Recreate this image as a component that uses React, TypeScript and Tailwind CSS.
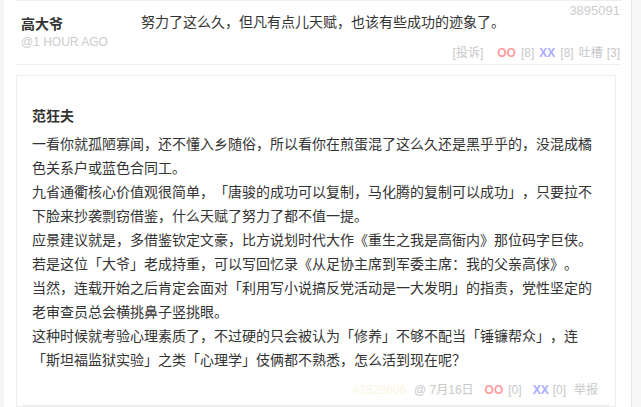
import React from "react";

const FONT = {
  fontFamily: '"Liberation Sans", "Noto Sans CJK SC", sans-serif',
};

const paragraphs = [
  "一看你就孤陋寡闻，还不懂入乡随俗，所以看你在煎蛋混了这么久还是黑乎乎的，没混成橘色关系户或蓝色合同工。",
  "九省通衢核心价值观很简单，「唐骏的成功可以复制，马化腾的复制可以成功」，只要拉不下脸来抄袭剽窃借鉴，什么天赋了努力了都不值一提。",
  "应景建议就是，多借鉴钦定文豪，比方说划时代大作《重生之我是高衙内》那位码字巨侠。",
  "若是这位「大爷」老成持重，可以写回忆录《从足协主席到军委主席：我的父亲高俅》。",
  "当然，连载开始之后肯定会面对「利用写小说搞反党活动是一大发明」的指责，党性坚定的老审查员总会横挑鼻子竖挑眼。",
  "这种时候就考验心理素质了，不过硬的只会被认为「修养」不够不配当「锤镰帮众」，连「斯坦福监狱实验」之类「心理学」伎俩都不熟悉，怎么活到现在呢？",
];

export default function App() {
  return (
    <div
      className="flex w-[641px] h-[407px] overflow-hidden bg-[#f6f6f6] [text-spacing-trim:space-all]"
      style={FONT}
    >
      <div className="w-[4px] shrink-0 bg-[#f4f4f4]" />
      <div className="w-[628px] shrink-0 bg-white border-r border-[#e8e8e8] pl-[12px] pr-[10px]">
        {/* main comment row */}
        <div className="flex h-[65px] border-y border-[#eeeeee]">
          <div className="w-[125px] shrink-0 pl-[5px] pt-[13px]">
            <div className="text-[14px] leading-[20px] font-bold text-[#333]">高大爷</div>
            <div className="text-[12px] leading-[16px] text-[#cccccc]">@1 HOUR AGO</div>
          </div>
          <div className="flex-1 flex flex-col pr-[1px]">
            <div className="flex justify-between items-start">
              <div className="mt-[11px] text-[14px] leading-[20px] text-[#333]">
                努力了这么久，但凡有点儿天赋，也该有些成功的迹象了。
              </div>
              <div className="mt-[2px] text-[13px] leading-[16px] text-[#cccccc]">3895091</div>
            </div>
            <div className="mt-auto pb-[3px] flex justify-end items-center text-[12px] leading-[16px] text-[#c8c8c8] whitespace-pre">
              <span>[投诉]</span>
              <span className="ml-[14px] font-bold text-[#ff9d9d]">OO</span>
              <span className="ml-[5px]">[8]</span>
              <span className="ml-[5px] font-bold text-[#aaaaff]">XX</span>
              <span className="ml-[5px]">[8]</span>
              <span className="ml-[5px]">吐槽</span>
              <span className="ml-[4px]">[3]</span>
            </div>
          </div>
        </div>

        {/* reply box */}
        <div className="mt-[10px] mr-[5px] border border-[#eeeeee] px-[5px] pt-[6px]">
          <div className="border-b border-[#eeeeee] px-[10px] pt-[24px] pb-[7px]">
            <div className="text-[14px] leading-[20px] font-bold text-[#333]">范狂夫</div>
            <div className="mt-[6px] text-[14px] leading-[24px] text-[#333]">
              {paragraphs.map((p, i) => (
                <div key={i}>{p}</div>
              ))}
            </div>
            <div className="mt-[10px] flex justify-end items-center text-[12px] leading-[16px] text-[#c8c8c8] whitespace-pre pr-[2px]">
              <span className="text-[#f9f6e0]">#2628606</span>
              <span className="ml-[8px]">@ 7月16日</span>
              <span className="ml-[11px] font-bold text-[#ff9d9d]">OO</span>
              <span className="ml-[5px]">[0]</span>
              <span className="ml-[11px] font-bold text-[#aaaaff]">XX</span>
              <span className="ml-[4px]">[0]</span>
              <span className="ml-[8px]">举报</span>
            </div>
          </div>
        </div>
      </div>
      <div className="flex-1 bg-[#f6f6f6]" />
    </div>
  );
}
